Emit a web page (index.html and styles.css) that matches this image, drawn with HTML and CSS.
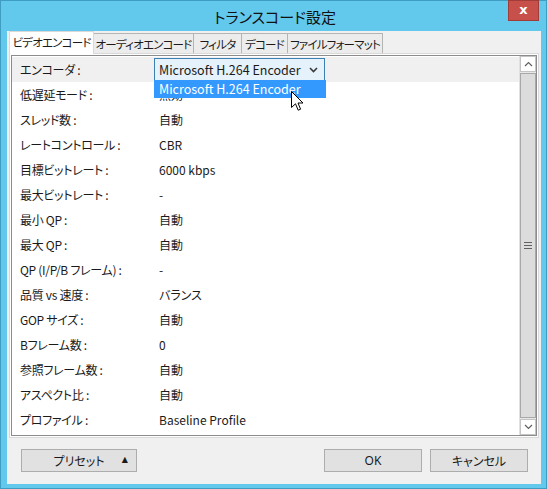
FILE: index.html
```html
<!DOCTYPE html>
<html lang="ja">
<head>
<meta charset="utf-8">
<title>トランスコード設定</title>
<link rel="stylesheet" href="styles.css">
</head>
<body>
<div class="window">
  <div class="titlebar">
    <span class="title">トランスコード設定</span>
    <div class="close">x</div>
  </div>
  <div class="client">
    <div class="tabs">
      <div class="tab active t1">ビデオエンコード</div>
      <div class="tab t2">オーディオエンコード</div>
      <div class="tab t3">フィルタ</div>
      <div class="tab t4">デコード</div>
      <div class="tab t5">ファイルフォーマット</div>
    </div>
    <div class="panel">
      <div class="list">
        <div class="rows">
          <div class="row sel"><span class="label">エンコーダ :</span>
            <div class="combo"><span>Microsoft H.264 Encoder</span>
              <svg class="chev" width="9" height="6" viewBox="0 0 9 6"><path d="M1 1 L4.5 4.5 L8 1" fill="none" stroke="#3a3a3a" stroke-width="1.6"/></svg>
            </div>
          </div>
          <div class="row"><span class="label">低遅延モード :</span><span class="value">無効</span></div>
          <div class="row"><span class="label">スレッド数 :</span><span class="value">自動</span></div>
          <div class="row"><span class="label">レートコントロール :</span><span class="value">CBR</span></div>
          <div class="row"><span class="label">目標ビットレート :</span><span class="value">6000 kbps</span></div>
          <div class="row"><span class="label">最大ビットレート :</span><span class="value">-</span></div>
          <div class="row"><span class="label">最小 QP :</span><span class="value">自動</span></div>
          <div class="row"><span class="label">最大 QP :</span><span class="value">自動</span></div>
          <div class="row"><span class="label">QP (I/P/B フレーム) :</span><span class="value">-</span></div>
          <div class="row"><span class="label">品質 vs 速度 :</span><span class="value">バランス</span></div>
          <div class="row"><span class="label">GOP サイズ :</span><span class="value">自動</span></div>
          <div class="row"><span class="label">Bフレーム数 :</span><span class="value">0</span></div>
          <div class="row"><span class="label">参照フレーム数 :</span><span class="value">自動</span></div>
          <div class="row"><span class="label">アスペクト比 :</span><span class="value">自動</span></div>
          <div class="row"><span class="label">プロファイル :</span><span class="value">Baseline Profile</span></div>
        </div>
        <div class="scrollbar">
          <div class="sb-btn">
            <svg width="9" height="6" viewBox="0 0 9 6"><path d="M1 5 L4.5 1.5 L8 5" fill="none" stroke="#606060" stroke-width="1.2"/></svg>
          </div>
          <div class="thumb">
            <svg width="8" height="7" viewBox="0 0 8 7"><path d="M0 0.5 H8 M0 3.5 H8 M0 6.5 H8" stroke="#606060" stroke-width="1"/></svg>
          </div>
          <div class="sb-btn">
            <svg width="9" height="6" viewBox="0 0 9 6"><path d="M1 1 L4.5 4.5 L8 1" fill="none" stroke="#606060" stroke-width="1.2"/></svg>
          </div>
        </div>
      </div>
    </div>
    <div class="buttons">
      <div class="btn preset"><span>プリセット</span><span class="tri">▲</span></div>
      <div class="spacer"></div>
      <div class="btn ok">OK</div>
      <div class="btn cancel">キャンセル</div>
    </div>
  </div>
  <div class="dropdown">Microsoft H.264 Encoder</div>
  <svg class="cursor" width="13" height="21" viewBox="0 0 13 21">
    <path d="M0.5 0.5 L0.5 16.5 L4.5 12.8 L7.2 19.2 L9.6 18.2 L7 12 L12 12 Z" fill="#fff" stroke="#000" stroke-width="1" stroke-linejoin="round"/>
  </svg>
</div>
</body>
</html>
```

FILE: styles.css
```css
* { box-sizing: border-box; }
html, body { margin: 0; padding: 0; }
body {
  width: 547px;
  height: 489px;
  overflow: hidden;
  background: #62c8ec;
  font-family: "Noto Sans CJK JP", "Noto Sans", sans-serif;
  font-feature-settings: "palt";
  font-size: 12px;
  color: #1a1a1a;
}
.window {
  position: relative;
  width: 547px;
  height: 489px;
  background: #62c8ec;
  border: 1px solid #3f9dc2;
  padding: 0 5px 4px 6px;
  display: flex;
  flex-direction: column;
}
.titlebar {
  height: 30px;
  flex: none;
  display: flex;
  align-items: center;
  justify-content: center;
  position: relative;
}
.title {
  font-size: 15px;
  color: #111;
  margin-left: 2px;
  margin-top: 1px;
}
.close {
  position: absolute;
  right: 2px;
  top: -1px;
  width: 31px;
  height: 21px;
  background: #c7504b;
  border: 1px solid #a23c38;
  color: #fff;
  font-family: "DejaVu Sans", sans-serif;
  font-weight: bold;
  font-size: 13px;
  line-height: 17px;
  text-align: center;
}
.client {
  flex: 1;
  background: #f0f0f0;
  padding-left: 2px;
  display: flex;
  flex-direction: column;
}
.tabs {
  height: 22px;
  display: flex;
  align-items: flex-end;
  flex: none;
  position: relative;
  z-index: 2;
}
.tab {
  height: 20px;
  border: 1px solid #b4b4b4;
  border-bottom: none;
  background: #ececec;
  display: flex;
  align-items: center;
  justify-content: center;
  margin-left: -1px;
  white-space: nowrap;
  font-size: 11.5px;
  letter-spacing: -0.8px;
}
.tab.active {
  height: 23px;
  margin-bottom: -1px;
  background: #fff;
  border-color: #d9d9d9;
  margin-left: 0;
  position: relative;
  z-index: 3;
  padding-bottom: 2px;
}
.t1 { width: 85px; }
.t2 { width: 101px; }
.t3 { width: 49px; }
.t4 { width: 47px; }
.t5 { width: 96px; }
.panel {
  height: 385px;
  flex: none;
  margin-right: 2px;
  border: 1px solid #d9d9d9;
  background: #fff;
  padding: 1px;
}
.list {
  height: 381px;
  border: 1px solid #8c8c8c;
  display: flex;
}
.rows {
  flex: 1;
  padding-top: 1px;
}
.row {
  height: 25px;
  display: flex;
  align-items: center;
  padding-left: 8px;
  white-space: nowrap;
}
.row.sel { background: #f0f0f0; }
.label { width: 139px; flex: none; letter-spacing: -0.3px; }
.combo {
  margin-left: -5px;
  width: 171px;
  height: 23px;
  border: 1px solid #3c7fb1;
  background: #e5f1fb;
  display: flex;
  align-items: center;
  justify-content: space-between;
  padding: 0 4px 0 4px;
  font-size: 12.5px;
}
.chev { margin-right: 2px; }
.scrollbar {
  width: 17px;
  flex: none;
  display: flex;
  flex-direction: column;
  background: #e8e8e8;
  border-left: 1px solid #e0e0e0;
}
.sb-btn {
  height: 16px;
  flex: none;
  background: #fff;
  border: 1px solid #c4c4c4;
  display: flex;
  align-items: center;
  justify-content: center;
}
.thumb {
  flex: 1;
  margin: 1px 0;
  background: #dcdcdc;
  border: 1px solid #a8a8a8;
  display: flex;
  align-items: center;
  justify-content: center;
}
.buttons {
  display: flex;
  margin-top: 11px;
  padding-left: 12px;
  padding-right: 13px;
}
.spacer { flex: 1; }
.btn {
  height: 23px;
  background: #e1e1e1;
  border: 1px solid #adadad;
  display: flex;
  align-items: center;
  justify-content: center;
  color: #1a1a1a;
}
.preset { width: 116px; position: relative; }
.preset .tri {
  position: absolute;
  right: 8px;
  top: 5px;
  font-size: 8px;
  font-family: "DejaVu Sans", sans-serif;
}
.ok { width: 98px; margin-right: 8px; font-family: "Noto Sans", sans-serif; }
.cancel { width: 98px; }
.dropdown {
  position: absolute;
  left: 153px;
  top: 79px;
  width: 172px;
  height: 18px;
  background: #3399ff;
  color: #fff;
  padding-left: 5px;
  font-size: 12.5px;
  line-height: 17px;
  white-space: nowrap;
}
.cursor {
  position: absolute;
  left: 290px;
  top: 90px;
}
```
